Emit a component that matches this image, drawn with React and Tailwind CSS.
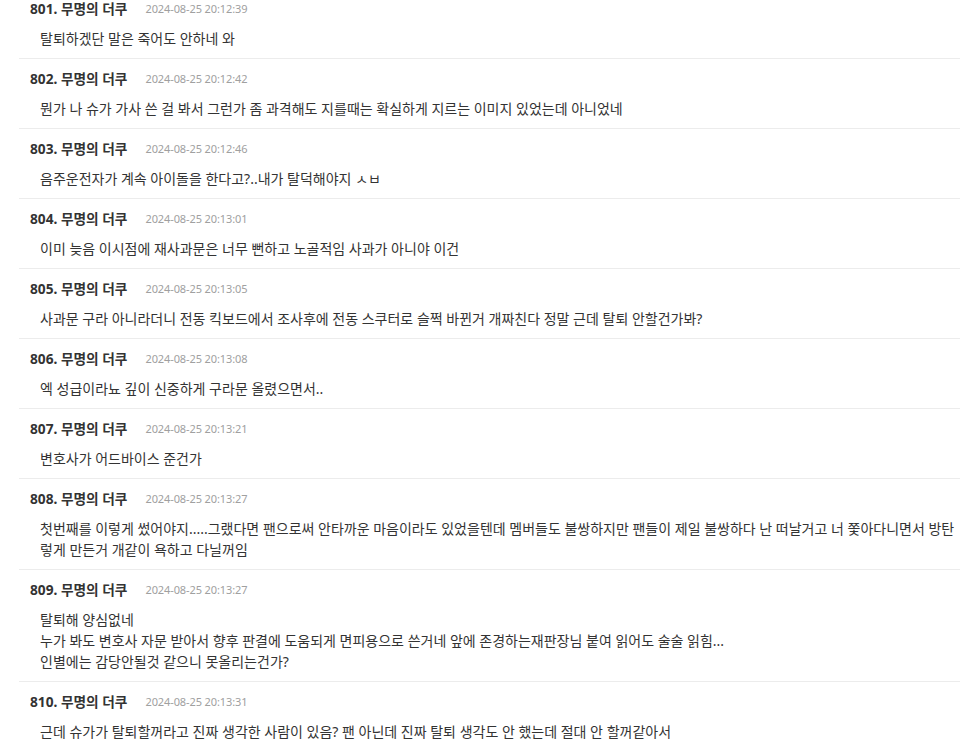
const comments = [
  { no: 801, date: '2024-08-25 20:12:39', lines: ['탈퇴하겠단 말은 죽어도 안하네 와'] },
  { no: 802, date: '2024-08-25 20:12:42', lines: ['뭔가 나 슈가 가사 쓴 걸 봐서 그런가 좀 과격해도 지를때는 확실하게 지르는 이미지 있었는데 아니었네'] },
  { no: 803, date: '2024-08-25 20:12:46', lines: ['음주운전자가 계속 아이돌을 한다고?..내가 탈덕해야지 ㅅㅂ'] },
  { no: 804, date: '2024-08-25 20:13:01', lines: ['이미 늦음 이시점에 재사과문은 너무 뻔하고 노골적임 사과가 아니야 이건'] },
  { no: 805, date: '2024-08-25 20:13:05', lines: ['사과문 구라 아니라더니 전동 킥보드에서 조사후에 전동 스쿠터로 슬쩍 바뀐거 개짜친다 정말 근데 탈퇴 안할건가봐?'] },
  { no: 806, date: '2024-08-25 20:13:08', lines: ['엑 성급이라뇨 깊이 신중하게 구라문 올렸으면서..'] },
  { no: 807, date: '2024-08-25 20:13:21', lines: ['변호사가 어드바이스 준건가'] },
  {
    no: 808,
    date: '2024-08-25 20:13:27',
    lines: [
      '첫번째를 이렇게 썼어야지.....그랬다면 팬으로써 안타까운 마음이라도 있었을텐데 멤버들도 불쌍하지만 팬들이 제일 불쌍하다 난 떠날거고 너 쫓아다니면서 방탄',
      '렇게 만든거 개같이 욕하고 다닐꺼임',
    ],
  },
  {
    no: 809,
    date: '2024-08-25 20:13:27',
    lines: [
      '탈퇴해 양심없네',
      '누가 봐도 변호사 자문 받아서 향후 판결에 도움되게 면피용으로 쓴거네 앞에 존경하는재판장님 붙여 읽어도 술술 읽힘...',
      '인별에는 감당안될것 같으니 못올리는건가?',
    ],
  },
  { no: 810, date: '2024-08-25 20:13:31', lines: ['근데 슈가가 탈퇴할꺼라고 진짜 생각한 사람이 있음? 팬 아닌데 진짜 탈퇴 생각도 안 했는데 절대 안 할꺼같아서'] },
]

const font = { fontFamily: '"Noto Sans", "Noto Sans CJK KR", sans-serif' }

export default function App() {
  return (
    <div className="w-[960px] h-[749px] overflow-hidden bg-white" style={font}>
      <div className="-mt-[11px] pl-[19px]">
        {comments.map((c, i) => (
          <div key={c.no} className={i > 0 ? 'border-t border-[#ececec]' : ''}>
            <div className="pt-[10px] pb-[9px]">
              <div className="flex items-center h-[20px] pl-[11px]">
                <span className="text-[13.7px] font-bold text-[#333]">
                  {c.no}. 무명의 더쿠
                </span>
                <span className="ml-[18px] text-[11px] tracking-[-0.1px] text-[#a0a0a0]">{c.date}</span>
              </div>
              <div className="mt-[9px] pl-[21px] text-[14px] leading-[21px] text-[#333] whitespace-nowrap">
                {c.lines.map((l, j) => (
                  <div key={j}>{l}</div>
                ))}
              </div>
            </div>
          </div>
        ))}
      </div>
    </div>
  )
}
